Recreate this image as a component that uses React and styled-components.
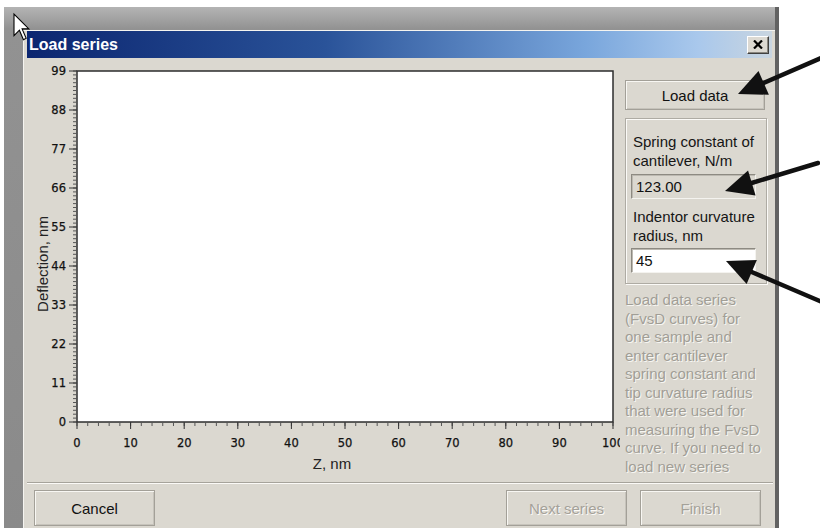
import React from 'react';
import styled, { createGlobalStyle } from 'styled-components';

const GlobalStyle = createGlobalStyle`
  body {
    margin: 0;
    background: #fff;
    font-family: 'Liberation Sans', Arial, sans-serif;
  }
`;

const Page = styled.div`
  position: relative;
  width: 820px;
  height: 528px;
  overflow: hidden;
`;

const Desktop = styled.div`
  box-sizing: border-box;
  display: flex;
  width: 775px;
  height: 521px;
  margin: 7px 0 0 4px;
  padding: 23px 4px 0 19px;
  background: linear-gradient(#b4b4b4, #929292 22px, #8a8a8a);
  box-shadow: inset -4px 0 0 #626262;
`;

const Dialog = styled.div`
  flex: 1;
  display: flex;
  flex-direction: column;
  padding: 0 3px;
  background: #dbd8d0;
  border-top: 1px solid #f5f4f0;
  border-left: 1px solid #f5f4f0;
`;

const TitleBar = styled.div`
  display: flex;
  align-items: center;
  justify-content: space-between;
  height: 27px;
  padding: 0 3px 0 2px;
  background: linear-gradient(90deg, #0c2670 0%, #2a5399 40%, #79a6dc 75%, #a9c8ec 90%, #c9d5e0 100%);
`;

const Title = styled.span`
  color: #fff;
  font-weight: bold;
  font-size: 16px;
`;

const CloseButton = styled.div`
  display: flex;
  align-items: center;
  justify-content: center;
  width: 22px;
  height: 18px;
  box-sizing: border-box;
  background: #dcd9d2;
  border: 1px solid;
  border-color: #fff #404040 #404040 #fff;
  box-shadow: inset -1px -1px 0 #8a8780;
`;

const Body = styled.div`
  display: flex;
  gap: 5px;
  height: 424px;
`;

const SidePanel = styled.div`
  display: flex;
  flex-direction: column;
  width: 142px;
  padding-top: 22px;
`;

const Button = styled.div`
  box-sizing: border-box;
  display: flex;
  align-items: center;
  justify-content: center;
  width: ${({ width }) => width || '121px'};
  height: ${({ height }) => height || '36px'};
  margin-right: ${({ push }) => (push ? 'auto' : '0')};
  background: #dbd8d0;
  border: 1px solid #a3a098;
  box-shadow: inset 1px 1px 0 #f8f7f3, inset -1px -1px 0 #c6c3bb;
  font-size: 15px;
  color: ${({ disabled }) => (disabled ? '#a4a199' : '#111')};
  text-shadow: ${({ disabled }) => (disabled ? '1px 1px 0 #fbfaf7' : 'none')};
`;

const GroupBox = styled.div`
  display: flex;
  flex-direction: column;
  margin-top: 8px;
  padding: 13px 6px 10px 5px;
  border: 1px solid #aeaba3;
  box-shadow: inset 1px 1px 0 #fbfaf7, 1px 1px 0 #fbfaf7;
`;

const FieldLabel = styled.div`
  margin-top: ${({ first }) => (first ? '0' : '8px')};
  padding-left: 2px;
  font-size: 15px;
  line-height: 19px;
  color: #151515;
`;

const Field = styled.div`
  box-sizing: border-box;
  width: 125px;
  height: 25px;
  margin-top: ${({ tight }) => (tight ? '3px' : '4px')};
  padding: 3px 4px;
  background: ${({ readOnly }) => (readOnly ? '#dbd8d0' : '#fff')};
  border: 1px solid;
  border-color: #8d8a82 #f4f3ef #f4f3ef #8d8a82;
  box-shadow: inset 1px 1px 0 #bcb9b1;
  font-size: 15px;
  line-height: 17px;
  color: #111;
`;

const Hint = styled.div`
  margin-top: 7px;
  font-size: 15px;
  line-height: 18.5px;
  white-space: nowrap;
  color: #a19e96;
  text-shadow: 1px 1px 0 #f7f6f2;
`;

const Separator = styled.div`
  border-top: 1px solid #a6a39b;
  border-bottom: 1px solid #fbfaf7;
  margin: 0 -1px 0 0;
`;

const ButtonRow = styled.div`
  display: flex;
  gap: 13px;
  padding: 6px 11px 0 7px;
`;

const Overlay = styled.svg`
  position: absolute;
  left: 0;
  top: 0;
  pointer-events: none;
`;

const PLOT = { left: 50, right: 586, top: 13, bottom: 364 };
const yPos = (v) => PLOT.bottom - (v / 99) * (PLOT.bottom - PLOT.top);
const xPos = (v) => PLOT.left + (v / 100) * (PLOT.right - PLOT.left);

const hintLines = [
  'Load data series',
  '(FvsD curves) for',
  'one sample and',
  'enter cantilever',
  'spring constant and',
  'tip curvature radius',
  'that were used for',
  'measuring the FvsD',
  'curve. If you need to',
  'load new series',
];

const tickFont = {
  fontFamily: 'DejaVu Sans, sans-serif',
  fontSize: 11.5,
  fill: '#111',
  stroke: '#111',
  strokeWidth: 0.25,
};

const Chart = () => {
  const yMinor = Array.from({ length: 91 }, (_, i) => i * 1.1);
  const xMinor = Array.from({ length: 51 }, (_, i) => i * 2);
  const yMajor = Array.from({ length: 10 }, (_, i) => i * 11);
  const xMajor = Array.from({ length: 11 }, (_, i) => i * 10);

  return (
    <svg width="593" height="424" style={{ display: 'block', flex: 'none' }}>
      <rect
        x={PLOT.left}
        y={PLOT.top}
        width={PLOT.right - PLOT.left}
        height={PLOT.bottom - PLOT.top}
        fill="#fff"
        stroke="#2c2c2c"
        strokeWidth="1.5"
      />
      {yMinor.map((v) => (
        <line key={`ym${v}`} x1={PLOT.left - 4} x2={PLOT.left} y1={yPos(v)} y2={yPos(v)} stroke="#555" strokeWidth="1" />
      ))}
      {yMajor.map((v) => (
        <g key={`y${v}`}>
          <line x1={PLOT.left - 8} x2={PLOT.left} y1={yPos(v)} y2={yPos(v)} stroke="#333" strokeWidth="1" />
          <text x="39" y={yPos(v) + 4} textAnchor="end" {...tickFont}>
            {v}
          </text>
        </g>
      ))}
      {xMinor.map((v) => (
        <line key={`xm${v}`} x1={xPos(v)} x2={xPos(v)} y1={PLOT.bottom} y2={PLOT.bottom + 4} stroke="#555" strokeWidth="1" />
      ))}
      {xMajor.map((v) => (
        <g key={`x${v}`}>
          <line x1={xPos(v)} x2={xPos(v)} y1={PLOT.bottom} y2={PLOT.bottom + 7} stroke="#333" strokeWidth="1" />
          <text x={xPos(v)} y="389" textAnchor="middle" {...tickFont}>
            {v}
          </text>
        </g>
      ))}
      <text x="305" y="411" textAnchor="middle" fontFamily="Liberation Sans, Arial, sans-serif" fontSize="15" fill="#222">
        Z, nm
      </text>
      <text
        transform="translate(21 206) rotate(-90)"
        textAnchor="middle"
        fontFamily="Liberation Sans, Arial, sans-serif"
        fontSize="15"
        fill="#222"
      >
        Deflection, nm
      </text>
    </svg>
  );
};

// callout arrow: shaft from start to the head base, filled triangle at the tip
const Arrow = ({ from, to }) => {
  const [sx, sy] = from;
  const [tx, ty] = to;
  const len = Math.hypot(tx - sx, ty - sy);
  const dx = (tx - sx) / len;
  const dy = (ty - sy) / len;
  const bx = tx - dx * 28;
  const by = ty - dy * 28;
  const nx = -dy * 13;
  const ny = dx * 13;
  return (
    <g>
      <line x1={sx} y1={sy} x2={bx + dx * 2} y2={by + dy * 2} stroke="#111" strokeWidth="4.5" strokeLinecap="round" />
      <polygon points={`${tx},${ty} ${bx + nx},${by + ny} ${bx - nx},${by - ny}`} fill="#111" />
    </g>
  );
};

const CloseGlyph = () => (
  <svg width="10" height="9" viewBox="0 0 10 9">
    <path d="M1 0.5 L9 8.5 M9 0.5 L1 8.5" stroke="#000" strokeWidth="2.2" />
  </svg>
);

const App = () => (
  <Page>
    <GlobalStyle />
    <Desktop>
      <Dialog>
        <TitleBar>
          <Title>Load series</Title>
          <CloseButton>
            <CloseGlyph />
          </CloseButton>
        </TitleBar>
        <Body>
          <Chart />
          <SidePanel>
            <Button width="140px" height="30px">Load data</Button>
            <GroupBox>
              <FieldLabel first>
                Spring constant of
                <br />
                cantilever, N/m
              </FieldLabel>
              <Field readOnly>123.00</Field>
              <FieldLabel>
                Indentor curvature
                <br />
                radius, nm
              </FieldLabel>
              <Field tight>45</Field>
            </GroupBox>
            <Hint>
              {hintLines.map((line) => (
                <div key={line}>{line}</div>
              ))}
            </Hint>
          </SidePanel>
        </Body>
        <Separator />
        <ButtonRow>
          <Button push>Cancel</Button>
          <Button disabled>Next series</Button>
          <Button disabled>Finish</Button>
        </ButtonRow>
      </Dialog>
    </Desktop>
    <Overlay width="820" height="528">
      <Arrow from={[821, 58]} to={[738, 94]} />
      <Arrow from={[818, 163]} to={[725, 191]} />
      <Arrow from={[822, 302]} to={[726, 261]} />
      <path
        transform="translate(14 14) scale(1.35)"
        d="M0 0 L0 16 L4 12 L7 19 L9 18 L6 11 L11 11 Z"
        fill="#fff"
        stroke="#000"
        strokeWidth="0.8"
        strokeLinejoin="miter"
      />
    </Overlay>
  </Page>
);

export default App;
